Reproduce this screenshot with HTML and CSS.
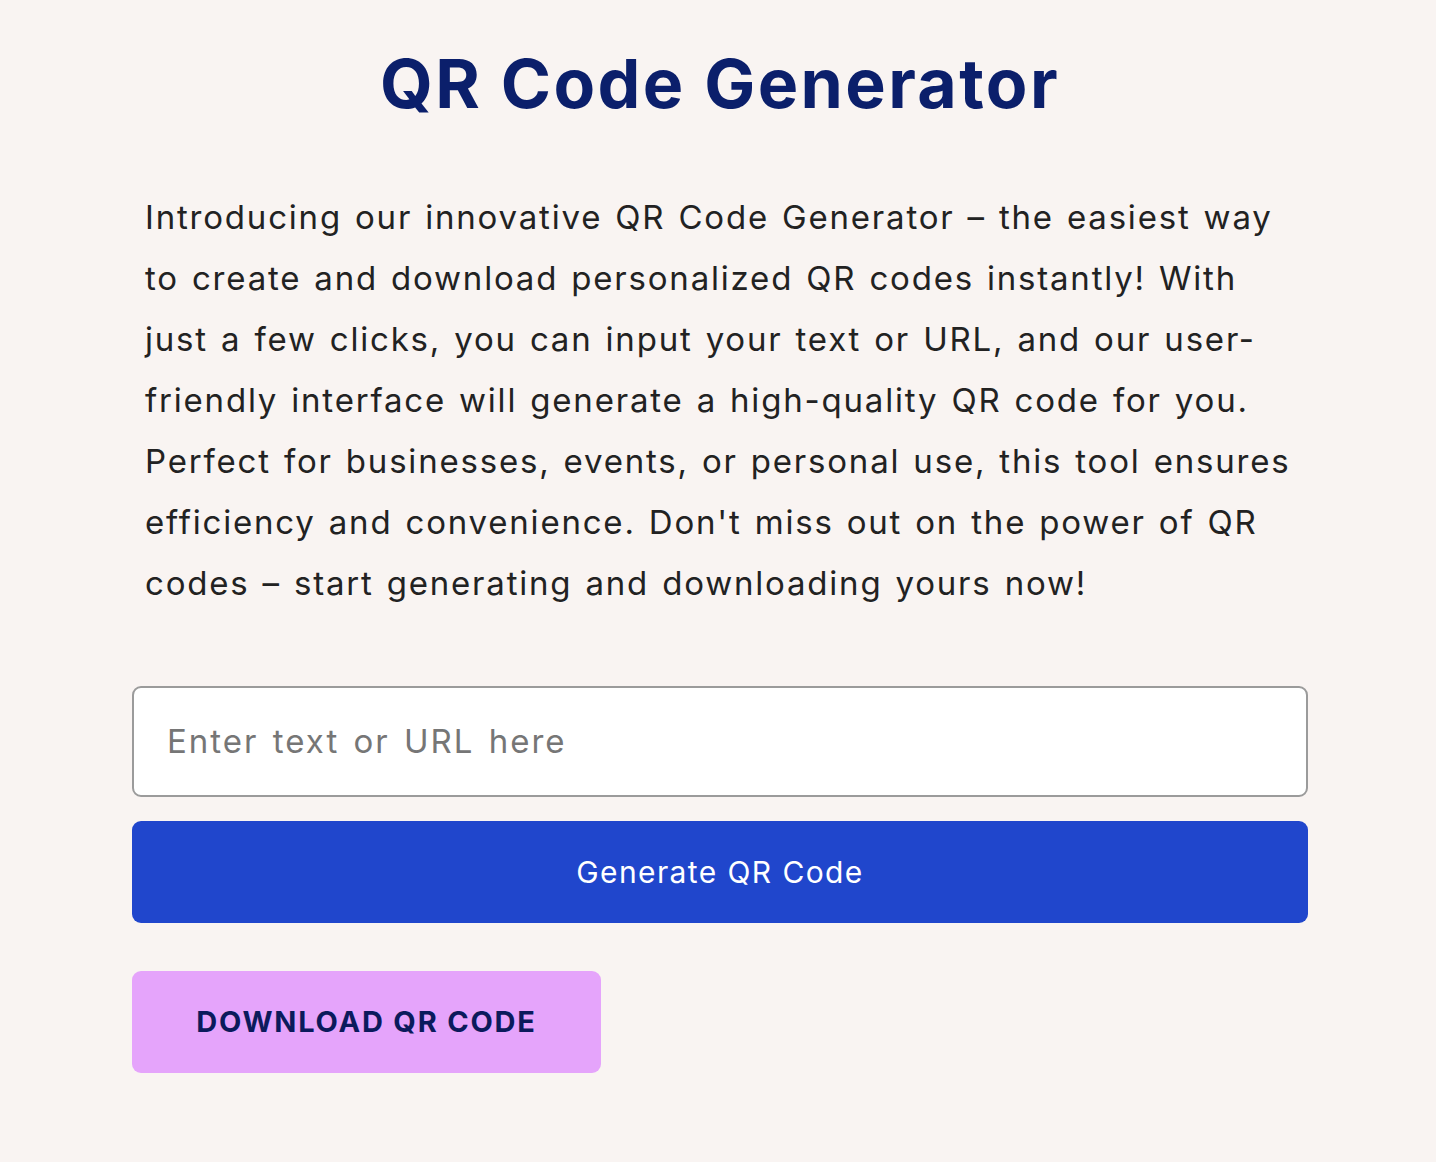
FILE: index.html
```html
<!DOCTYPE html>
<html lang="en">
<head>
<meta charset="UTF-8" />
<meta name="viewport" content="width=device-width, initial-scale=1" />
<title>QR Code Generator</title>
<link rel="stylesheet" href="styles.css">
</head>
<body>
<div class="container">
  <h1 class="title">QR Code Generator</h1>

  <p class="intro">Introducing our innovative QR Code Generator – the easiest way to create and download personalized QR codes instantly! With just a few clicks, you can input your text or URL, and our user-friendly interface will generate a high-quality QR code for you. Perfect for businesses, events, or personal use, this tool ensures efficiency and convenience. Don't miss out on the power of QR codes – start generating and downloading yours now!</p>

  <form class="qr-form" id="qrForm">
    <input type="text" class="qr-input" id="qrText" placeholder="Enter text or URL here" />
    <button type="submit" class="btn-generate">Generate QR Code</button>
  </form>

  <div class="qr-output" id="qrOutput"></div>

  <button type="button" class="btn-download" id="downloadBtn">Download QR Code</button>
</div>
</body>
</html>
```

FILE: styles.css
```css
* {
  margin: 0;
  padding: 0;
  box-sizing: border-box;
}

body {
  font-family: Inter, "Open Sans", sans-serif;
  background: #f9f4f2;
  color: #222;
  padding: 0 0 40px 4px;
}

.container {
  width: 1176px;
  margin: 0 auto;
}

.title {
  text-align: center;
  color: #0b1f6b;
  font-size: 68px;
  font-weight: 700;
  line-height: 1.2;
  letter-spacing: 2.4px;
  padding-top: 43px;
}

.intro {
  font-size: 33px;
  line-height: 61px;
  letter-spacing: 1.8px;
  word-spacing: 2px;
  padding: 0 13px;
  margin-top: 62px;
  color: #222;
}

.qr-form {
  display: flex;
  flex-direction: column;
  gap: 24px;
  margin-top: 72px;
}

.qr-input {
  height: 111px;
  border: 2px solid #9b9b9b;
  border-radius: 9px;
  background: #fff;
  padding: 0 33px;
  font-family: inherit;
  font-size: 33px;
  letter-spacing: 2px;
  word-spacing: 3px;
  color: #222;
}

.qr-input::placeholder {
  color: #767676;
}

.btn-generate {
  height: 102px;
  border: none;
  border-radius: 9px;
  background: #2046cc;
  color: #fff;
  font-family: inherit;
  font-size: 30px;
  letter-spacing: 1.4px;
  cursor: pointer;
}

.btn-download {
  display: block;
  margin-top: 48px;
  width: 469px;
  height: 102px;
  border: none;
  border-radius: 9px;
  background: #e5a4fb;
  color: #0b1a5c;
  font-family: inherit;
  font-size: 29px;
  font-weight: 700;
  text-transform: uppercase;
  letter-spacing: 1.8px;
  cursor: pointer;
}
```
